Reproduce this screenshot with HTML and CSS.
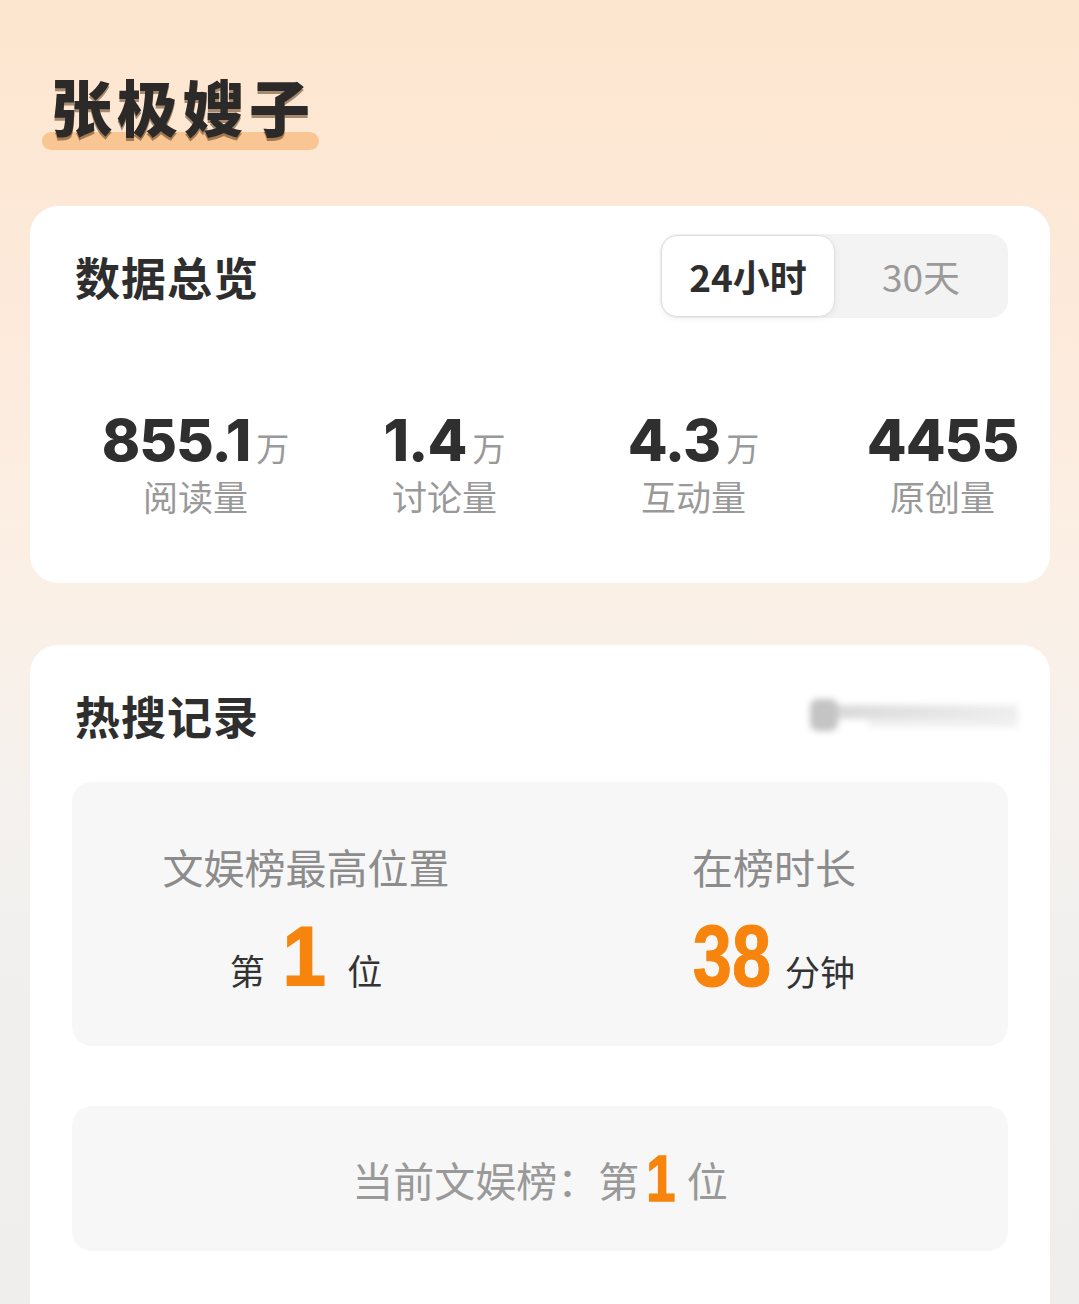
FILE: index.html
```html
<!DOCTYPE html>
<html lang="zh-CN">
<head>
<meta charset="utf-8">
<title>张极嫂子</title>
<link rel="stylesheet" href="styles.css">
</head>
<body>
<div class="page">
  <div class="hero">
    <h1 class="title">张极嫂子</h1>
  </div>

  <section class="card overview">
    <div class="card-head">
      <h2 class="card-title">数据总览</h2>
      <div class="seg">
        <div class="seg-item active">24小时</div>
        <div class="seg-item">30天</div>
      </div>
    </div>
    <div class="stats">
      <div class="stat">
        <div class="stat-value"><span class="num">855.1</span><span class="unit">万</span></div>
        <div class="stat-label">阅读量</div>
      </div>
      <div class="stat">
        <div class="stat-value"><span class="num">1.4</span><span class="unit">万</span></div>
        <div class="stat-label">讨论量</div>
      </div>
      <div class="stat">
        <div class="stat-value"><span class="num">4.3</span><span class="unit">万</span></div>
        <div class="stat-label">互动量</div>
      </div>
      <div class="stat">
        <div class="stat-value"><span class="num">4455</span></div>
        <div class="stat-label">原创量</div>
      </div>
    </div>
  </section>

  <section class="card hot">
    <div class="card-head">
      <h2 class="card-title">热搜记录</h2>
      <div class="blurred"><span class="blur-dot"></span><span class="blur-bar"></span><span class="blur-bar2"></span></div>
    </div>
    <div class="box rank-box">
      <div class="rank-col">
        <div class="rank-label">文娱榜最高位置</div>
        <div class="rank-value"><span class="dark">第</span><span class="big one">1</span><span class="dark">位</span></div>
      </div>
      <div class="rank-col">
        <div class="rank-label">在榜时长</div>
        <div class="rank-value"><span class="big two">38</span><span class="dark">分钟</span></div>
      </div>
    </div>
    <div class="box current-box">
      <span class="cur-text">当前文娱榜：第</span><span class="cur-num">1</span><span class="cur-text">位</span>
    </div>
  </section>
</div>
</body>
</html>
```

FILE: styles.css
```css
html, body {
  margin: 0;
  padding: 0;
}
body {
  font-family: "Noto Sans CJK SC", "Noto Sans", sans-serif;
  color: #2f2f2f;
}
.page {
  box-sizing: border-box;
  height: 1304px;
  overflow: hidden;
  padding: 0 29px 0 30px;
  background: linear-gradient(180deg, #fde6cf 0%, #fdeadb 25%, #fbf0e6 45%, #f4f1ee 62%, #f0efee 80%, #efeeed 100%);
}
.hero {
  height: 206px;
  box-sizing: border-box;
  padding: 66px 0 0 12px;
}
.title {
  position: relative;
  display: inline-block;
  margin: 0;
  padding: 0 4px 0 9px;
  font-size: 61px;
  line-height: 80px;
  font-weight: 900;
  letter-spacing: 5px;
  color: #2c2a28;
  text-shadow: 0 3px 0 rgba(92, 58, 26, 0.55);
  z-index: 0;
}
.title::after {
  content: "";
  position: absolute;
  left: 0;
  right: 0;
  bottom: -4px;
  height: 18px;
  border-radius: 9px;
  background: #f9c592;
  z-index: -1;
}

.card {
  background: #fff;
  border-radius: 28px;
  padding: 28px 42px 0 45px;
}
.overview {
  height: 377px;
  box-sizing: border-box;
}
.hot {
  margin-top: 62px;
  padding-left: 42px;
  height: 700px;
  box-sizing: border-box;
}
.card-head {
  display: flex;
  align-items: center;
  justify-content: space-between;
  height: 84px;
}
.card-title {
  margin: 0;
  font-size: 45px;
  font-weight: 700;
  letter-spacing: 1px;
  color: #2e2e2e;
}
.hot .card-title {
  padding-left: 3px;
}

.seg {
  display: flex;
  width: 348px;
  height: 84px;
  box-sizing: border-box;
  padding: 1px;
  background: #f3f3f3;
  border-radius: 18px;
}
.seg-item {
  flex: 1;
  display: flex;
  align-items: center;
  justify-content: center;
  font-size: 37px;
  color: #9a9a9a;
  border-radius: 16px;
}
.seg-item.active {
  background: #fff;
  border: 1px solid #dedede;
  box-shadow: 0 2px 6px rgba(0, 0, 0, 0.06);
  color: #2e2e2e;
  font-weight: 700;
}

.stats {
  display: grid;
  grid-template-columns: repeat(4, 249px);
  margin: 92px -90px 0 -4px;
}
.stat {
  display: flex;
  flex-direction: column;
  align-items: center;
}
.stat-value {
  display: flex;
  align-items: baseline;
  height: 60px;
}
.num {
  font-family: Inter, "Noto Sans", sans-serif;
  font-weight: 800;
  font-size: 58px;
  line-height: 60px;
  letter-spacing: -1px;
  color: #2f2f2f;
}
.unit {
  font-size: 33px;
  color: #999;
  margin-left: 6px;
}
.stat-label {
  margin-top: 2px;
  font-size: 35px;
  line-height: 48px;
  color: #999;
}

.blurred {
  position: relative;
  width: 210px;
  height: 44px;
  margin-right: -10px;
  filter: blur(3px);
}
.blur-dot {
  position: absolute;
  left: 2px;
  top: 6px;
  width: 28px;
  height: 32px;
  border-radius: 8px;
  background: #c4c4c4;
}
.blur-bar {
  position: absolute;
  left: 30px;
  top: 12px;
  width: 180px;
  height: 14px;
  background: linear-gradient(90deg, #dadada, #efefef);
}
.blur-bar2 {
  position: absolute;
  left: 60px;
  top: 26px;
  width: 150px;
  height: 8px;
  background: #f0f0f0;
}

.box {
  background: #f7f7f7;
  border-radius: 20px;
}
.rank-box {
  margin-top: 25px;
  height: 264px;
  display: grid;
  grid-template-columns: 1fr 1fr;
}
.rank-col {
  display: flex;
  flex-direction: column;
  align-items: center;
  padding-top: 56px;
}
.rank-label {
  font-size: 41px;
  line-height: 56px;
  color: #8c8c8c;
}
.rank-value {
  display: flex;
  align-items: baseline;
  margin-top: 20px;
}
.dark {
  font-size: 35px;
  color: #333;
}
.big {
  display: inline-block;
  font-family: "Liberation Sans", Arial, sans-serif;
  font-weight: 700;
  line-height: 84px;
  color: #f7840c;
  transform-origin: center bottom;
}
.big.one {
  font-size: 84px;
  transform: scaleX(0.92);
  margin: 0 20px 0 16px;
  -webkit-text-stroke: 2px #f7840c;
}
.big.two {
  font-size: 88px;
  transform: scaleX(0.8);
  margin: 0 4px 0 -10px;
  -webkit-text-stroke: 1px #f7840c;
}

.current-box {
  margin-top: 60px;
  height: 145px;
  display: flex;
  align-items: center;
  justify-content: center;
}
.cur-text {
  font-size: 41px;
  color: #999;
}
.cur-num {
  display: inline-block;
  font-family: "Liberation Sans", Arial, sans-serif;
  font-weight: 700;
  font-size: 64px;
  line-height: 64px;
  color: #f7840c;
  margin: 0 8px 0 4px;
  transform: scaleX(0.82);
  -webkit-text-stroke: 1.5px #f7840c;
}
```
